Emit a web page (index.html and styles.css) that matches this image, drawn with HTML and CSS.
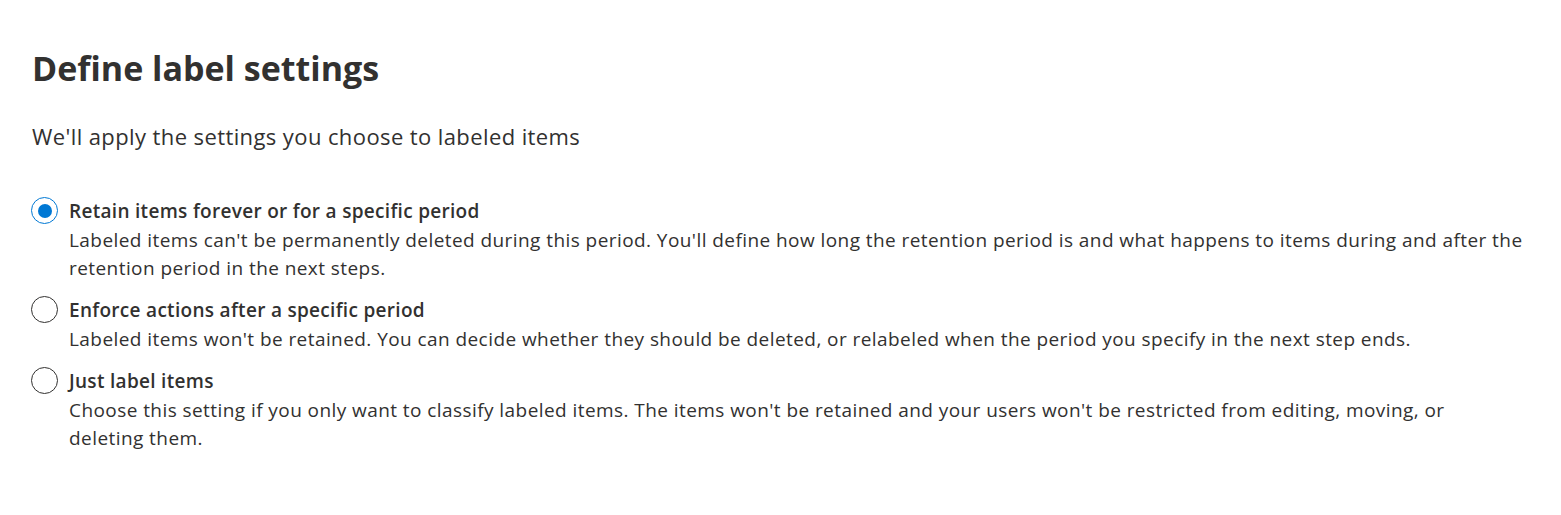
FILE: index.html
```html
<!DOCTYPE html>
<html>
<head>
<meta charset="utf-8">
<link rel="stylesheet" href="styles.css">
</head>
<body>
<main class="page">
  <h1 class="title">Define label settings</h1>
  <p class="subtitle">We'll apply the settings you choose to labeled items</p>
  <div class="options" role="radiogroup">
    <label class="option">
      <span class="radio checked"></span>
      <span class="text">
        <span class="label">Retain items forever or for a specific period</span>
        <span class="desc">Labeled items can't be permanently deleted during this period. You'll define how long the retention period is and what happens to items during and after the retention period in the next steps.</span>
      </span>
    </label>
    <label class="option">
      <span class="radio"></span>
      <span class="text">
        <span class="label">Enforce actions after a specific period</span>
        <span class="desc">Labeled items won't be retained. You can decide whether they should be deleted, or relabeled when the period you specify in the next step ends.</span>
      </span>
    </label>
    <label class="option">
      <span class="radio"></span>
      <span class="text">
        <span class="label">Just label items</span>
        <span class="desc">Choose this setting if you only want to classify labeled items. The items won't be retained and your users won't be restricted from editing, moving, or deleting them.</span>
      </span>
    </label>
  </div>
</main>
</body>
</html>
```
FILE: styles.css
```css
html, body {
  margin: 0;
  padding: 0;
  background: #ffffff;
}
body {
  font-family: "Open Sans", "Noto Sans", sans-serif;
  color: #323130;
}
.page {
  padding: 44px 37px 0 32px;
}
.title {
  margin: 0;
  font-size: 34px;
  line-height: 48px;
  font-weight: 700;
}
.subtitle {
  margin: 30px 0 0 0;
  font-size: 22px;
  line-height: 28px;
  letter-spacing: 0.4px;
}
.options {
  margin-top: 47px;
  margin-left: -1px;
  display: flex;
  flex-direction: column;
  gap: 14px;
}
.option {
  display: flex;
  align-items: flex-start;
  gap: 11px;
}
.radio {
  flex: none;
  width: 25px;
  height: 25px;
  border: 1.5px solid #323130;
  border-radius: 50%;
  display: flex;
  align-items: center;
  justify-content: center;
  box-sizing: content-box;
}
.radio.checked {
  border-color: #0078d4;
}
.radio.checked::after {
  content: "";
  width: 14px;
  height: 14px;
  border-radius: 50%;
  background: #0078d4;
}
.text {
  display: flex;
  flex-direction: column;
  flex: 1;
  min-width: 0;
}
.label {
  font-size: 19px;
  line-height: 29px;
  font-weight: 600;
  letter-spacing: 0.3px;
}
.desc {
  font-size: 19px;
  line-height: 28px;
  letter-spacing: 0.43px;
}
```
